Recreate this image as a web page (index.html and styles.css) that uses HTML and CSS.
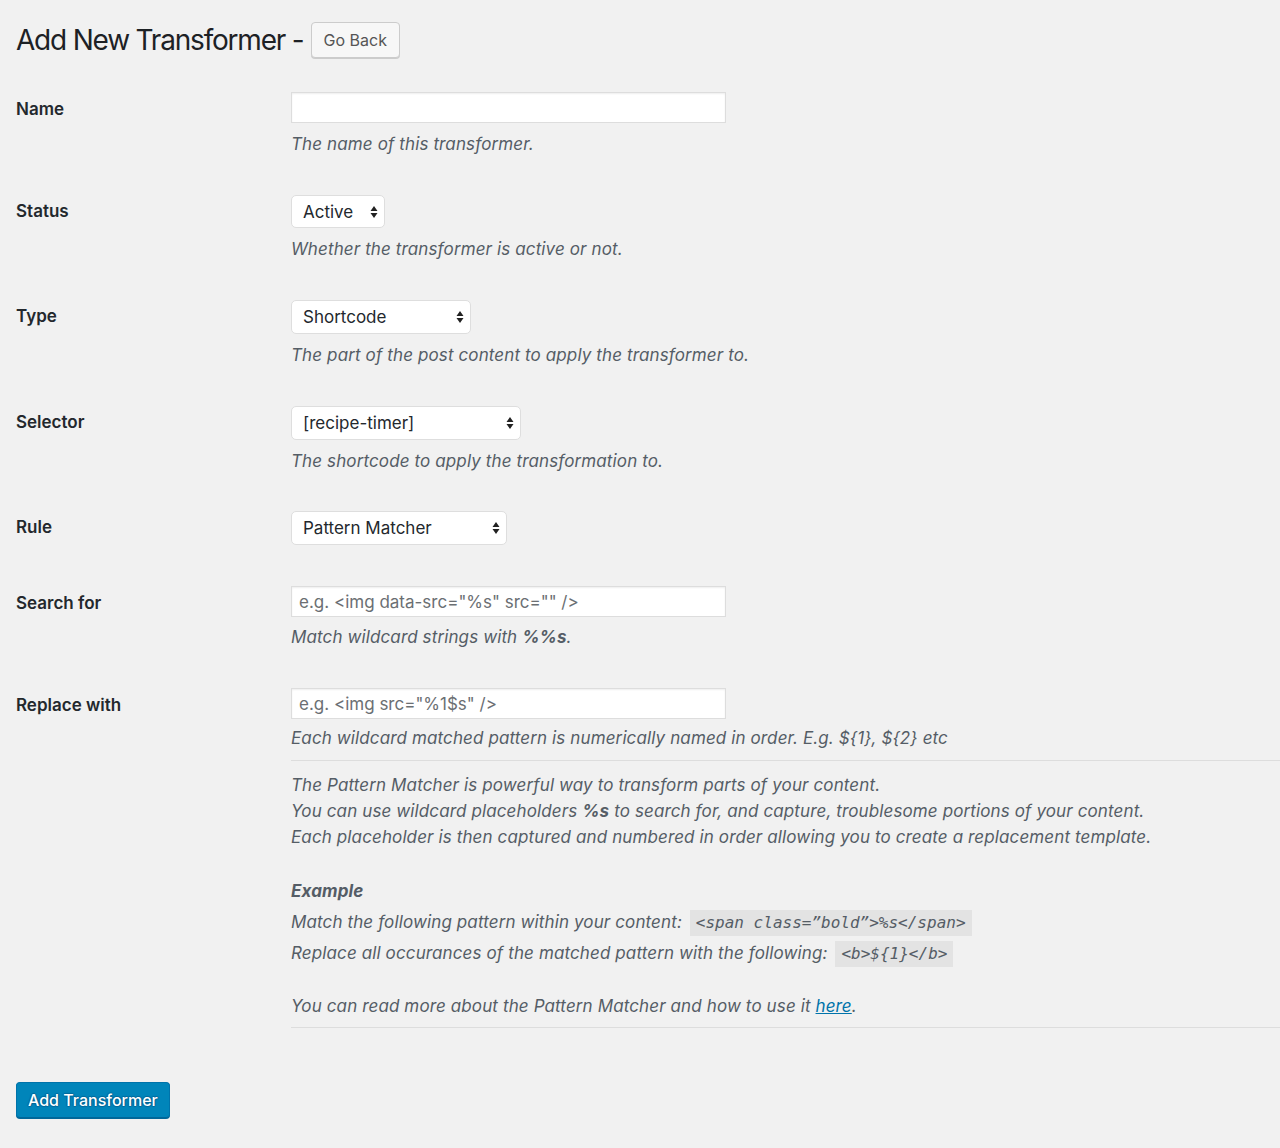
FILE: index.html
```html
<!DOCTYPE html>
<html>
<head>
<meta charset="utf-8">
<link rel="stylesheet" href="styles.css">
</head>
<body>
<div class="wrap">
  <div class="header">
    <h1 class="title">Add New Transformer -</h1>
    <a class="button">Go Back</a>
  </div>
  <div class="form">
    <div class="row">
      <div class="label lab-input">Name</div>
      <div class="field">
        <input class="text" type="text">
        <p class="desc">The name of this transformer.</p>
      </div>
    </div>
    <div class="row">
      <div class="label lab-select">Status</div>
      <div class="field">
        <span class="select w-status"><span class="sel-text">Active</span><svg class="arrows" width="8" height="14" viewBox="0 0 8 14"><path d="M4 1 L7.5 6 L0.5 6 Z M4 13 L7.5 8 L0.5 8 Z" fill="#222"/></svg></span>
        <p class="desc">Whether the transformer is active or not.</p>
      </div>
    </div>
    <div class="row">
      <div class="label lab-select">Type</div>
      <div class="field">
        <span class="select w-type"><span class="sel-text">Shortcode</span><svg class="arrows" width="8" height="14" viewBox="0 0 8 14"><path d="M4 1 L7.5 6 L0.5 6 Z M4 13 L7.5 8 L0.5 8 Z" fill="#222"/></svg></span>
        <p class="desc">The part of the post content to apply the transformer to.</p>
      </div>
    </div>
    <div class="row row-tight">
      <div class="label lab-select">Selector</div>
      <div class="field">
        <span class="select w-selector"><span class="sel-text">[recipe-timer]</span><svg class="arrows" width="8" height="14" viewBox="0 0 8 14"><path d="M4 1 L7.5 6 L0.5 6 Z M4 13 L7.5 8 L0.5 8 Z" fill="#222"/></svg></span>
        <p class="desc">The shortcode to apply the transformation to.</p>
      </div>
    </div>
    <div class="row row-nodesc">
      <div class="label lab-select">Rule</div>
      <div class="field">
        <span class="select w-rule"><span class="sel-text">Pattern Matcher</span><svg class="arrows" width="8" height="14" viewBox="0 0 8 14"><path d="M4 1 L7.5 6 L0.5 6 Z M4 13 L7.5 8 L0.5 8 Z" fill="#222"/></svg></span>
      </div>
    </div>
    <div class="row">
      <div class="label lab-input">Search for</div>
      <div class="field">
        <input class="text" type="text" placeholder="e.g. &lt;img data-src=&quot;%s&quot; src=&quot;&quot; /&gt;">
        <p class="desc desc-mid">Match wildcard strings with <b>%%s</b>.</p>
      </div>
    </div>
    <div class="row row-last">
      <div class="label lab-input">Replace with</div>
      <div class="field">
        <input class="text" type="text" placeholder="e.g. &lt;img src=&quot;%1$s&quot; /&gt;">
        <p class="desc desc-tight">Each wildcard matched pattern is numerically named in order. E.g. ${1}, ${2} etc</p>
        <div class="help">
          <p class="help-p">The Pattern Matcher is powerful way to transform parts of your content.<br>You can use wildcard placeholders <b>%s</b> to search for, and capture, troublesome portions of your content.<br>Each placeholder is then captured and numbered in order allowing you to create a replacement template.</p>
          <p class="help-p help-ex"><b class="ex-title">Example</b></p>
          <p class="help-code">Match the following pattern within your content: <code>&lt;span class=”bold”&gt;%s&lt;/span&gt;</code></p>
          <p class="help-code">Replace all occurances of the matched pattern with the following: <code>&lt;b&gt;${1}&lt;/b&gt;</code></p>
          <p class="help-p help-more">You can read more about the Pattern Matcher and how to use it <a class="link">here</a>.</p>
        </div>
      </div>
    </div>
  </div>
  <div class="submit">
    <a class="button-primary">Add Transformer</a>
  </div>
</div>
</body>
</html>
```

FILE: styles.css
```css
html, body {
  margin: 0;
  padding: 0;
  background: #f1f1f1;
}
body {
  font-family: Inter, "Noto Sans", sans-serif;
  color: #23282d;
  font-size: 17px;
  width: 1280px;
  height: 1148px;
  overflow: hidden;
}
.wrap {
  padding-left: 16px;
}
.header {
  display: flex;
  align-items: center;
  padding-top: 22px;
  height: 36px;
}
.title {
  margin: 0;
  font-size: 28px;
  font-weight: 400;
  color: #1d2125;
  line-height: 36px;
  letter-spacing: -1.2px;
  margin-right: 7px;
}
.button {
  display: inline-flex;
  align-items: center;
  box-sizing: border-box;
  height: 36px;
  padding: 0 12px;
  border: 1px solid #cccccc;
  border-radius: 4px;
  background: #f7f7f7;
  box-shadow: 0 1px 0 #cccccc;
  color: #555;
  font-size: 16px;
}
.form {
  margin-top: 34px;
}
.row {
  display: flex;
  margin-bottom: 38px;
}
.row-tight {
  margin-bottom: 37px;
}
.row-nodesc {
  margin-bottom: 41px;
}
.row-last {
  margin-bottom: 0;
}
.label {
  width: 275px;
  flex: none;
  font-weight: 600;
  font-size: 17px;
  color: #23282d;
}
.lab-input {
  line-height: 35px;
}
.lab-select {
  line-height: 33px;
}
.field {
  flex: 1;
  min-width: 0;
}
.text {
  display: block;
  box-sizing: border-box;
  width: 435px;
  height: 31px;
  margin: 0;
  padding: 0 7px;
  border: 1px solid #dddddd;
  background: #fff;
  box-shadow: inset 0 1px 2px rgba(0,0,0,0.07);
  font-family: inherit;
  font-size: 17px;
  color: #32373c;
  outline: none;
}
.text::placeholder {
  color: #6b6f73;
}
.select {
  position: relative;
  display: flex;
  align-items: center;
  box-sizing: border-box;
  height: 34px;
  padding-left: 11px;
  border: 1px solid #dedede;
  border-radius: 5px;
  background: #fff;
  color: #23282d;
  font-size: 17px;
}
.w-status { width: 94px; height: 33px; }
.w-type { width: 180px; }
.w-selector { width: 230px; }
.w-rule { width: 216px; }
.arrows {
  position: absolute;
  right: 6px;
  top: 9px;
}
.desc {
  margin: 8px 0 0;
  line-height: 26px;
  font-style: italic;
  color: #555d66;
  font-size: 17px;
  letter-spacing: 0.12px;
}
.desc-mid {
  margin-top: 7px;
}
.desc-tight {
  margin-top: 6px;
}
.desc b {
  font-weight: 700;
}
.help {
  margin-top: 9px;
  border-top: 1px solid #dddddd;
  border-bottom: 1px solid #dddddd;
  padding: 11px 0 8px;
  font-style: italic;
  color: #555d66;
  letter-spacing: 0.12px;
}
.help p {
  margin: 0;
}
.help-p {
  line-height: 26px;
}
.help-ex {
  margin-top: 28px !important;
}
.ex-title {
  font-weight: 700;
}
.help-code {
  line-height: 31px;
}
.help-ex + .help-code {
  margin-top: 3px !important;
}
.help-more {
  margin-top: 24px !important;
}
code {
  font-family: "DejaVu Sans Mono", monospace;
  font-style: italic;
  font-size: 16px;
  letter-spacing: 0;
  background: #e3e3e3;
  padding: 3px 6px 4px;
  color: #555d66;
  margin-left: 3px;
}
.link {
  color: #0073aa;
  text-decoration: underline;
}
.submit {
  margin-top: 54px;
}
.button-primary {
  display: inline-flex;
  align-items: center;
  box-sizing: border-box;
  height: 36px;
  padding: 0 11px;
  background: #0085ba;
  border: 1px solid #0073aa;
  border-bottom-color: #006799;
  border-radius: 4px;
  box-shadow: 0 1px 0 #006799;
  color: #fff;
  font-size: 16px;
  font-weight: 500;
  text-shadow: 0 -1px 1px #006799, 1px 0 1px #006799, 0 1px 1px #006799, -1px 0 1px #006799;
}
```
